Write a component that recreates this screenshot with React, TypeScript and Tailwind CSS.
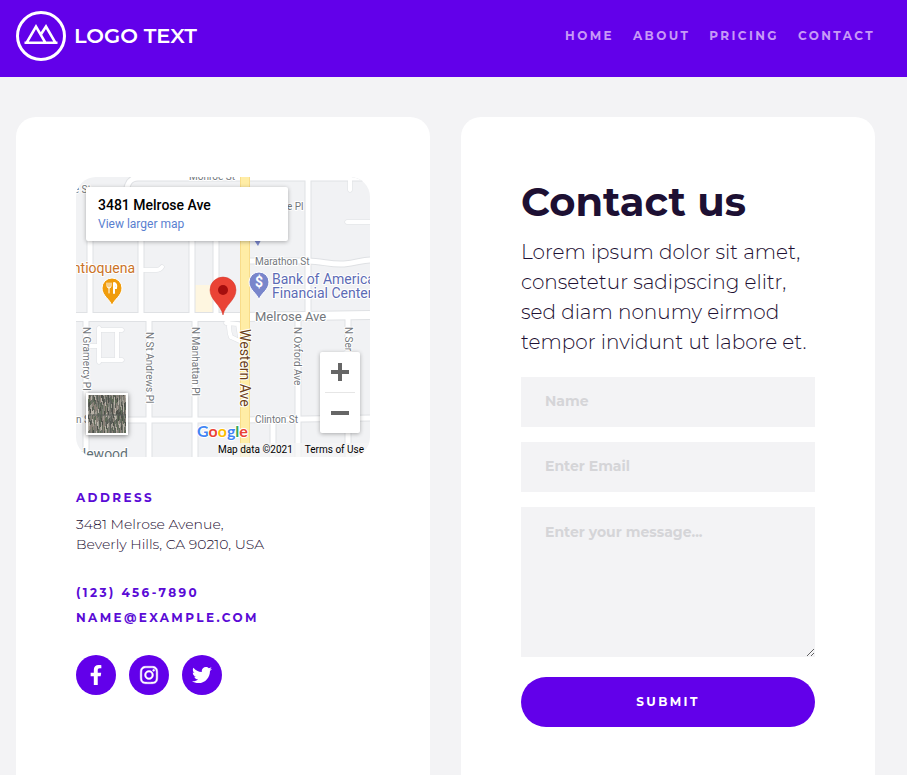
import { FaFacebookF, FaInstagram, FaTwitter } from "react-icons/fa";

const navLinks = ["Home", "About", "Pricing", "Contact"];

const socials = [
  { label: "Facebook", Icon: FaFacebookF, weight: 0 },
  { label: "Instagram", Icon: FaInstagram, weight: 12 },
  { label: "Twitter", Icon: FaTwitter, weight: 0 },
];

const roads = [
  "M14 50V140",
  "M10 140V280",
  "M65 50V140",
  "M73 140V280",
  "M116 50V140",
  "M119 140V280",
  "M140 50V140",
  "M232 0V140",
  "M222 140V280",
  "M197 243V280",
  "M272 140V280",
  "M0 140H170L294 138",
  "M0 243H170L294 241",
  "M50 20C50 8 53 1 62 1H294",
  "M174 84H232C246 84 255 88 268 87S285 83 294 83",
];

const lanes = [
  "M274 -4V13",
  "M296 45H271",
  "M65 93H80Q84 93 86 90",
  "M23 151V185M23 153H46M23 183H46M41 153V183M12 169H23",
  "M152 143C154 149 152 154 155 160M155 160L168 166M150 146L162 147L164 160",
];

const tileColors = ["#4d504a", "#7b7c74", "#a09c92", "#5f6a58", "#8a8178", "#5a5d57", "#b8b2a8", "#6b6f66"];

function Aerial() {
  const cells = [];
  let state = 17;
  for (let row = 0; row < 10; row++) {
    for (let col = 0; col < 38; col++) {
      state = (state * 1103515 + 12345) % 2147483;
      const shade = Math.floor(state / 97) % tileColors.length;
      cells.push(<rect key={`${row}-${col}`} x={col} y={row * 4 - (col % 4)} width={1} height={5} fill={tileColors[shade]} />);
    }
  }
  return (
    <svg viewBox="0 0 38 38" className="size-full bg-[#6b6f66]" aria-hidden="true">
      {cells}
      <path d="M0 20H38M22 0V38" stroke="#5b5e5b" strokeWidth="1" />
    </svg>
  );
}

function Pin({ x, y, color }: { x: number; y: number; color: string }) {
  return (
    <path
      transform={`translate(${x} ${y})`}
      d="M0 17C-2 10 -10 7 -10 -1A10 10 0 0 1 10 -1C10 7 2 10 0 17Z"
      fill={color}
      stroke="#fff"
      strokeWidth="1"
    />
  );
}

function StreetMap() {
  return (
    <svg
      viewBox="0 0 294 280"
      preserveAspectRatio="xMidYMid slice"
      className="size-full font-['Roboto',sans-serif]"
      role="img"
      aria-label="Street map around 3481 Melrose Avenue"
    >
      <rect width="294" height="280" fill="#f1f2f4" />
      <rect x="119" y="108" width="22" height="29" fill="#fef6e0" />
      <g fill="none" stroke="#dfe1e4">
        {roads.map((d) => <path key={d} d={d} strokeWidth={d.includes("M0 140") ? 10 : 7} />)}
        {lanes.map((d) => <path key={d} d={d} strokeWidth="5" strokeLinecap="round" />)}
      </g>
      <g fill="none" stroke="#fff">
        {roads.map((d) => <path key={d} d={d} strokeWidth={d.includes("M0 140") ? 8 : 5} />)}
        {lanes.map((d) => <path key={d} d={d} strokeWidth="4" strokeLinecap="round" />)}
      </g>
      <path d="M169 0V280" stroke="#f8dc8a" strokeWidth="10" />
      <path d="M169 0V280" stroke="#ffeda6" strokeWidth="8" />

      <g fill="#73777c" fontSize="10" stroke="#fff" strokeWidth="2" paintOrder="stroke" strokeLinejoin="round">
        <text x="113" y="3">Monroe St</text>
        <text x="-8" y="16">oe St</text>
        <text x="211" y="33">e Pl</text>
        <text x="179" y="88">Marathon St</text>
        <text x="179" y="144" fontSize="13">Melrose Ave</text>
        <text x="179" y="246">Clinton St</text>
        <text x="0" y="246">n St</text>
        <text transform="translate(7 150) rotate(90)">N Gramercy Pl</text>
        <text transform="translate(70 155) rotate(90)">N St Andrews Pl</text>
        <text transform="translate(116 150) rotate(90)">N Manhattan Pl</text>
        <text transform="translate(218 150) rotate(90)">N Oxford Ave</text>
        <text transform="translate(269 150) rotate(90)">N Serrano</text>
        <text x="52" y="282" fontSize="14" textAnchor="end" fill="#5f7076">glewood</text>
        <text transform="translate(164 152) rotate(90)" fontSize="14" fill="#6d3f18">Western Ave</text>
        <text x="59" y="96" fontSize="14" textAnchor="end" fill="#ca7328">Antioquena</text>
        <text x="196" y="107" fontSize="14" fill="#5c6bb5">Bank of America</text>
        <text x="196" y="121" fontSize="14" fill="#5c6bb5">Financial Center</text>
      </g>

      <Pin x={36} y={112} color="#f09c0c" />
      <g fill="none" stroke="#fff" strokeWidth="1" strokeLinecap="round">
        <path d="M31 106V109Q31 111 33 111Q35 111 35 109V106M33 106V116" />
        <path d="M38 106V116M38 106Q41 107 40 111H38" strokeWidth="2" />
      </g>
      <Pin x={183} y={106} color="#7986cb" />
      <text x="183" y="110" textAnchor="middle" fontSize="14" fontWeight="700" fill="#fff">$</text>
      <path d="M178 63H185L182 69Z" fill="#7986cb" />

      <path
        d="M147 138C145 128 134 123 134 113A13 13 0 0 1 160 113C160 123 149 128 147 138Z"
        fill="#ea4335"
        stroke="#d33426"
        strokeWidth="0.5"
      />
      <circle cx="147" cy="113" r="5" fill="#a50e0e" />

      <g fontSize="16" fontWeight="700" stroke="#fff" strokeWidth="2" paintOrder="stroke" strokeLinejoin="round" className="font-['Lato',sans-serif]">
        <text x="121" y="260">
          <tspan fill="#4285f4">G</tspan>
          <tspan fill="#ea4335">o</tspan>
          <tspan fill="#fbbc04">o</tspan>
          <tspan fill="#4285f4">g</tspan>
          <tspan fill="#34a853">l</tspan>
          <tspan fill="#ea4335">e</tspan>
        </text>
      </g>
    </svg>
  );
}

function MapCard() {
  return (
    <div className="relative h-[280px] overflow-hidden rounded-[20px] font-['Roboto',sans-serif]">
      <StreetMap />
      <div className="absolute top-[10px] left-[10px] h-[54px] w-[202px] rounded-xs bg-white px-3 pt-2 shadow-[0_1px_4px_rgba(0,0,0,0.3)]">
        <p className="text-sm font-medium text-black">3481 Melrose Ave</p>
        <a href="#map" className="block text-xs leading-[18px] text-[#5a7fd0]">View larger map</a>
      </div>
      <button type="button" aria-label="Show satellite imagery" className="absolute bottom-[22px] left-[10px] size-[42px] border-2 border-white shadow-[0_1px_5px_rgba(0,0,0,0.5)]">
        <Aerial />
      </button>
      <div className="absolute right-[10px] bottom-6 flex w-10 flex-col items-center rounded-xs bg-white shadow-[0_1px_4px_rgba(0,0,0,0.3)]">
        <button type="button" aria-label="Zoom in" className="grid h-10 w-full place-items-center">
          <svg viewBox="0 0 18 18" className="size-[18px]"><path d="M0 9H18M9 0V18" stroke="#666" strokeWidth="4" /></svg>
        </button>
        <span className="h-px w-[30px] bg-[#e6e6e6]" />
        <button type="button" aria-label="Zoom out" className="grid h-10 w-full place-items-center">
          <svg viewBox="0 0 18 18" className="size-[18px]"><path d="M0 9H18" stroke="#666" strokeWidth="4" /></svg>
        </button>
      </div>
      <div className="absolute right-0 bottom-0 flex h-[14px] items-center gap-3 bg-[#f5f5f5]/70 pr-[6px] text-[10px] leading-[14px] text-black">
        <span>Map data ©2021</span>
        <a href="#terms">Terms of Use</a>
      </div>
    </div>
  );
}

export default function App() {
  return (
    <div className="min-h-screen bg-[#f3f3f5] font-['Montserrat','Inter',sans-serif] text-[#1d1033]">
      <header className="flex items-center justify-between bg-[#6200ea] pt-[11px] pr-8 pb-4 pl-4">
        <a href="#home" className="flex items-center gap-2 text-white">
          <svg viewBox="0 0 50 50" className="size-[50px]" fill="none" stroke="currentColor" strokeWidth="3" aria-hidden="true">
            <circle cx="25" cy="25" r="23.5" />
            <path d="M10.5 31.8L20 15.5L29.5 31.8M24.5 24L30 15.5L39.5 31.8M8.5 31.8H41.5" strokeWidth="2.6" />
          </svg>
          <span className="text-[21px] font-semibold">LOGO TEXT</span>
        </a>
        <nav className="flex gap-[19px] text-xs font-bold tracking-[0.2em] text-[#c799f7] uppercase">
          {navLinks.map((name) => (
            <a key={name} href={`#${name.toLowerCase()}`}>{name}</a>
          ))}
        </nav>
      </header>

      <main className="grid grid-cols-2 gap-[31px] pt-10 pr-8 pb-10 pl-4">
        <section className="rounded-[20px] bg-white p-[60px] pb-20">
          <MapCard />
          <h2 className="mt-[31px] text-xs leading-5 font-bold tracking-[0.2em] text-[#5a0bd6] uppercase">Address</h2>
          <address className="mt-[6px] text-sm leading-5 font-light not-italic">
            3481 Melrose Avenue,
            <br />
            Beverly Hills, CA 90210, USA
          </address>
          <div className="mt-[26px] flex flex-col items-start text-xs leading-[25px] font-bold tracking-[0.2em] text-[#5a0bd6] uppercase">
            <a href="tel:+11234567890">(123) 456-7890</a>
            <a href="mailto:name@example.com">name@example.com</a>
          </div>
          <div className="mt-[25px] flex gap-[13px]">
            {socials.map(({ label, Icon, weight }) => (
              <a key={label} href={`#${label.toLowerCase()}`} aria-label={label} className="grid size-10 place-items-center rounded-full bg-[#6200ea] text-white">
                <Icon className="size-5" strokeWidth={weight} />
              </a>
            ))}
          </div>
        </section>

        <section className="rounded-[20px] bg-white p-[60px] pb-20">
          <h1 className="text-[40px] leading-[50px] font-bold">Contact us</h1>
          <p className="mt-[10px] text-xl leading-[30px] font-light">
            Lorem ipsum dolor sit amet, consetetur sadipscing elitr, sed diam nonumy eirmod tempor invidunt ut labore et.
          </p>
          <form className="mt-5 flex flex-col text-sm font-bold" onSubmit={(event) => event.preventDefault()}>
            <input type="text" aria-label="Name" placeholder="Name" className="h-[50px] w-full bg-[#f3f3f5] px-6 pb-[2px] placeholder:text-[#d5d5d8]" />
            <input type="email" aria-label="Email" placeholder="Enter Email" className="mt-[15px] h-[50px] w-full bg-[#f3f3f5] px-6 pb-[2px] placeholder:text-[#d5d5d8]" />
            <textarea aria-label="Message" placeholder="Enter your message..." className="mt-[15px] h-[150px] w-full resize bg-[#f3f3f5] px-6 py-[15px] placeholder:text-[#d5d5d8]" />
            <button type="submit" className="mt-5 h-[50px] rounded-full bg-[#6200ea] text-xs font-bold tracking-[0.2em] text-white uppercase">Submit</button>
          </form>
        </section>
      </main>
    </div>
  );
}
